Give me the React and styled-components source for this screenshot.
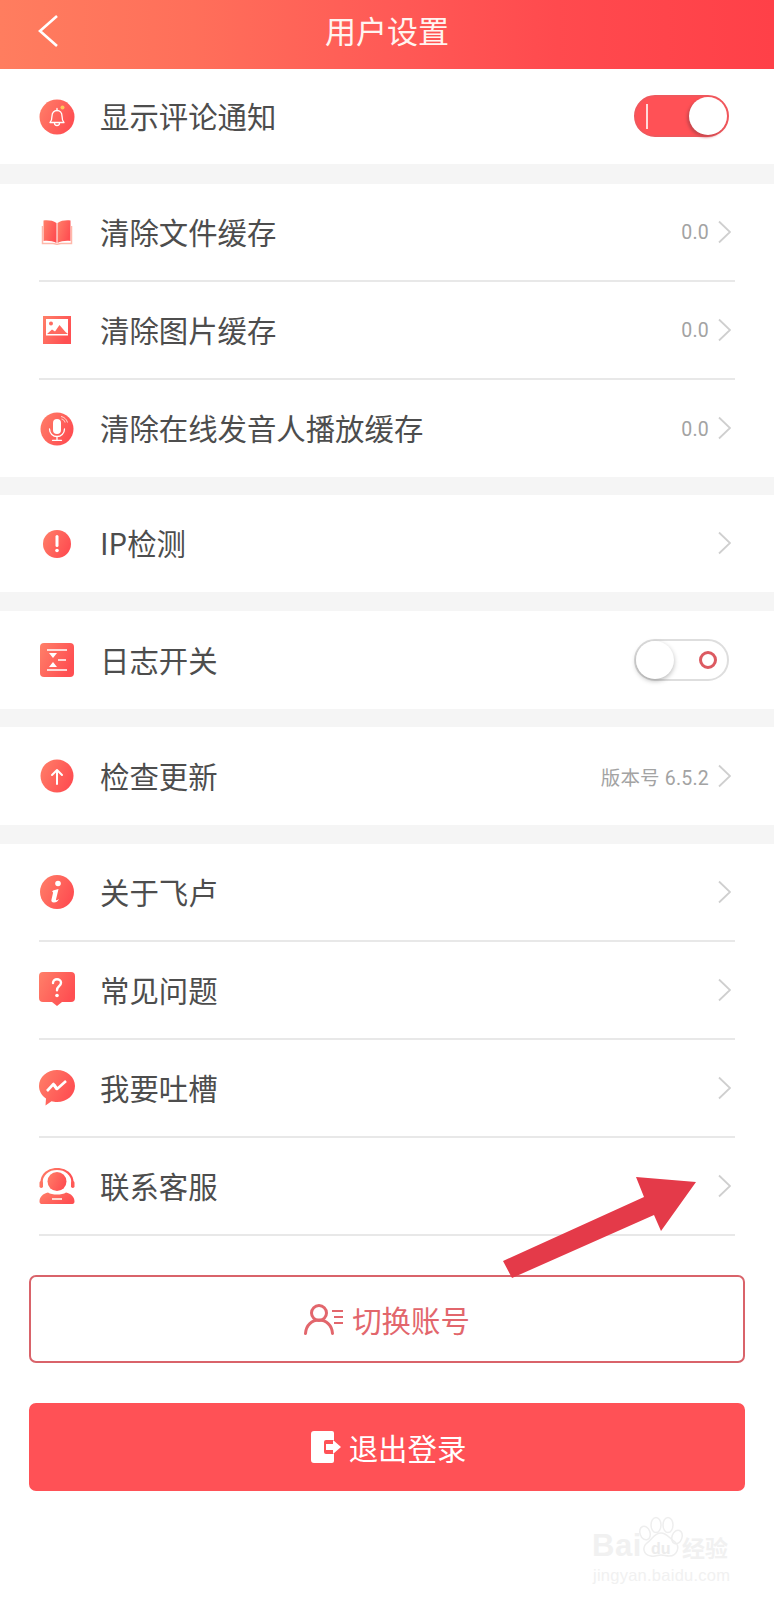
import React from "react";
import styled, { createGlobalStyle } from "styled-components";

const Global = createGlobalStyle`
  html, body { margin: 0; padding: 0; background: #fff; }
  body { font-family: "Noto Sans CJK SC", "Noto Sans", sans-serif; }
`;

const Page = styled.div`
  position: relative;
  width: 774px;
  height: 1600px;
  overflow: hidden;
  background: #fff;
`;

const Header = styled.header`
  height: 69px;
  display: flex;
  align-items: center;
  justify-content: center;
  background: linear-gradient(90deg, #ff7d5f 0%, #ff6f5a 25%, #ff5a56 50%, #ff4a4e 72%, #ff4048 100%);
`;

const BackButton = styled.button`
  position: absolute;
  left: 37px;
  top: 14px;
  width: 24px;
  height: 34px;
  padding: 0;
  border: 0;
  background: none;
  display: block;
`;

const Title = styled.h1`
  margin: -10px 0 0;
  font-size: 31px;
  font-weight: 400;
  line-height: 46px;
  color: #fff4f0;
`;

const Group = styled.section`
  background: #fff;
  margin-bottom: ${(p) => p.$gap || 0}px;
  box-shadow: 0 ${(p) => p.$gap || 0}px 0 #f5f5f5;
`;

const Row = styled.div`
  box-sizing: border-box;
  height: ${(p) => p.$h || 97}px;
  margin: 0 39px;
  padding-right: 5px;
  display: flex;
  align-items: center;
  border-bottom: ${(p) => (p.$line ? "2px solid #e8e8e8" : "0")};
`;

const IconBox = styled.span`
  width: 36px;
  height: 36px;
  margin-right: 25px;
  flex: none;
  display: block;
  svg { display: block; }
`;

const Label = styled.span`
  flex: 1;
  font-size: 29.4px;
  line-height: 40px;
  color: #4d4d4d;
  margin-top: -3px;
`;

const Value = styled.span`
  font-family: Roboto, "Noto Sans CJK SC", sans-serif;
  font-size: 19.5px;
  color: #a3a3a3;
  margin-right: 9px;
  letter-spacing: 0.2px;
  margin-top: 1px;
`;

const Chevron = styled.svg`
  width: 13px;
  height: 24px;
  margin-right: -1px;
  flex: none;
  margin-top: -1px;
`;

const Track = styled.span`
  position: relative;
  box-sizing: border-box;
  width: 95px;
  height: 42px;
  margin: ${(p) => (p.$on ? "-1px" : "0")} 1px 0 0;
  border-radius: 21px;
  flex: none;
  background: ${(p) => (p.$on ? "#ff5156" : "#fff")};
  border: 2px solid ${(p) => (p.$on ? "#f0575c" : "#dedede")};
`;

const Knob = styled.span`
  position: absolute;
  top: 0;
  ${(p) => (p.$on ? "right: 0;" : "left: 0;")}
  width: 38px;
  height: 38px;
  border-radius: 50%;
  background: #fff;
  box-shadow: ${(p) => (p.$on ? "-2px 2px 3px #c8464c" : "0 2px 5px rgba(0,0,0,.28)")};
`;

const OnMark = styled.span`
  position: absolute;
  left: 10px;
  top: 7px;
  width: 2px;
  height: 25px;
  background: #ffd9d9;
`;

const OffMark = styled.span`
  position: absolute;
  right: 10px;
  top: 10px;
  box-sizing: border-box;
  width: 18px;
  height: 18px;
  border-radius: 50%;
  border: 3px solid #dc5a61;
`;

const Actions = styled.div`
  padding: 39px 29px 0;
  display: flex;
  flex-direction: column;
  gap: 40px;
`;

const ActionButton = styled.button`
  box-sizing: border-box;
  height: 88px;
  border-radius: 7px;
  display: flex;
  align-items: center;
  justify-content: center;
  gap: ${(p) => (p.$filled ? 8 : 8)}px;
  padding: ${(p) => (p.$filled ? "0 0 0 3px" : "0")};
  font-family: inherit;
  font-size: 29.4px;
  color: ${(p) => (p.$filled ? "#fff" : "#e2666c")};
  background: ${(p) => (p.$filled ? "#ff5156" : "#fff")};
  border: 2px solid ${(p) => (p.$filled ? "#ff5156" : "#d9636a")};
`;

const ArrowMark = styled.svg`
  position: absolute;
  left: 0;
  top: 0;
  pointer-events: none;
`;

const Watermark = styled.div`
  position: absolute;
  left: 591px;
  top: 1515px;
  width: 145px;
  height: 70px;
  color: #f1f1f1;
`;

const WmBai = styled.span`
  position: absolute;
  left: 1px;
  top: 12px;
  font: 700 31px/38px "Liberation Sans", sans-serif;
  letter-spacing: 0.5px;
`;

const WmDu = styled.span`
  position: absolute;
  left: 60px;
  top: 25px;
  font: 700 16px/18px "Liberation Sans", sans-serif;
  color: #ececec;
`;

const WmCn = styled.span`
  position: absolute;
  left: 91px;
  top: 18px;
  font-size: 23px;
  line-height: 28px;
  font-weight: 700;
`;

const WmUrl = styled.span`
  position: absolute;
  left: 2px;
  top: 50px;
  font: 400 16.5px/20px "Liberation Sans", sans-serif;
  white-space: nowrap;
  letter-spacing: 0.25px;
`;

const Grad = ({ id }) => (
  <defs>
    <linearGradient id={id} x1="0" y1="0" x2="1" y2="0.5">
      <stop offset="0" stopColor="#ff8069" />
      <stop offset="1" stopColor="#ff4f52" />
    </linearGradient>
  </defs>
);

const Svg = ({ id, children }) => (
  <svg width="36" height="36" viewBox="0 0 36 36">
    <Grad id={id} />
    {children}
  </svg>
);

const BellIcon = () => (
  <Svg id="g1">
    <circle cx="18" cy="18" r="17.500" fill="url(#g1)" />
    <path d="M11 23.500c1.500-1.500 2-3 2-6.500 0-3.200 2.200-5.500 5-5.500s5 2.300 5 5.500c0 3.500.5 5 2 6.500z" fill="none" stroke="#fff" strokeWidth="1.300" strokeLinejoin="round" />
    <path d="M15.500 24a2.500 2.500 0 0 0 5 0M18 11.500V9.500" fill="none" stroke="#fff" strokeWidth="1.300" strokeLinecap="round" />
    <circle cx="23.500" cy="8.500" r="2" fill="#ffc65a" />
  </Svg>
);

const BookIcon = () => (
  <Svg id="g2">
    <path d="M17.500 9C14 6.500 9 6 4.500 6.500V27c4.500-.5 9.500 0 13 2z" fill="url(#g2)" />
    <path d="M18.500 9C22 6.500 27 6 31.500 6.500V27c-4.500-.5-9.500 0-13 2z" fill="url(#g2)" />
    <path d="M3.500 12v17.500H14c2 0 3 .8 4 .8s2-.8 4-.8h10.500V12" fill="none" stroke="#ffb8aa" strokeWidth="1.500" />
  </Svg>
);

const ImageIcon = () => (
  <Svg id="g3">
    <rect x="4" y="4" width="28" height="28" fill="url(#g3)" />
    <rect x="7" y="7" width="22" height="16.500" fill="#fff" />
    <circle cx="12" cy="11.500" r="2" fill="#ff6a60" />
    <path d="M8 22l5-4.500 3 2 4.500-6.500 6 7 2.500 2z" fill="#ff6a60" />
  </Svg>
);

const MicIcon = () => (
  <Svg id="g4">
    <circle cx="18" cy="18" r="16.500" fill="url(#g4)" />
    <rect x="14" y="8" width="8" height="15" rx="4" fill="#fff" />
    <path d="M10.500 18c0 4.500 3.500 7.500 7.500 7.500s7.500-3 7.500-7.500M18 25.500v3.500M13.500 29.300h9" fill="none" stroke="#fff" strokeWidth="1.300" strokeLinecap="round" />
    <path d="M22 5.500c3 .5 5.500 2.500 6.500 6M22.500 8c2 .5 3 1.500 3.500 3.500" fill="none" stroke="#ffd9d2" strokeWidth="1" />
  </Svg>
);

const AlertIcon = () => (
  <Svg id="g5">
    <circle cx="18" cy="18" r="14" fill="url(#g5)" />
    <path d="M18 10.500v9" stroke="#fff" strokeWidth="3" strokeLinecap="round" />
    <circle cx="18" cy="24.500" r="1.800" fill="#fff" />
  </Svg>
);

const LogIcon = () => (
  <Svg id="g6">
    <rect x="1" y="1" width="34" height="34" rx="4" fill="url(#g6)" />
    <path d="M8 8h20M8 28h20" stroke="#fff" strokeWidth="1.500" />
    <path d="M10 11h8l-4 5zM10 25l4-5 4 5z" fill="#fff" />
    <path d="M19 18h8" stroke="#fff" strokeWidth="1.500" />
  </Svg>
);

const UpIcon = () => (
  <Svg id="g7">
    <circle cx="18" cy="18" r="16.500" fill="url(#g7)" />
    <path d="M18 26V12M13 17l5-5 5 5" fill="none" stroke="#fff" strokeWidth="2" strokeLinecap="round" strokeLinejoin="round" />
  </Svg>
);

const InfoIcon = () => (
  <Svg id="g8">
    <circle cx="18" cy="18" r="17" fill="url(#g8)" />
    <circle cx="19" cy="9.500" r="2.800" fill="#fff" />
    <path d="M14 16.500l5.500-1.500-2.500 10.500c-.2 1 .5 1.200 3-.5-1 2.500-3 3.500-5 3.500-2.500 0-3-1.500-2.500-3l1.500-6.500c.2-1-.5-1.200-1-1z" fill="#fff" />
  </Svg>
);

const QuestionIcon = () => (
  <Svg id="g9">
    <path d="M4 0h28a4 4 0 0 1 4 4v22a4 4 0 0 1-4 4h-9l-5 4-5-4H4a4 4 0 0 1-4-4V4a4 4 0 0 1 4-4z" fill="url(#g9)" />
    <path d="M14 11c0-2.500 2-3.800 4-3.800s4 1.300 4 3.500c0 3.500-4 3.500-4 7.500" fill="none" stroke="#fff" strokeWidth="2.400" strokeLinecap="round" />
    <circle cx="18" cy="23.500" r="1.800" fill="#fff" />
  </Svg>
);

const ChatIcon = () => (
  <Svg id="g10">
    <path d="M18 0c10 0 18 7 18 16s-8 16-18 16c-2 0-4-.3-5.500-.8L6.500 35.500l.5-7C2.500 25.500 0 21 0 16 0 7 8 0 18 0z" fill="url(#g10)" />
    <path d="M8 21l6.500-7 3.500 5 9-8" fill="none" stroke="#fff" strokeWidth="2.600" strokeLinejoin="round" />
    <path d="M18 19l-3-4" stroke="#fff" strokeWidth="3" />
  </Svg>
);

const AgentIcon = () => (
  <Svg id="g11">
    <circle cx="18" cy="13.500" r="9.500" fill="url(#g11)" />
    <path d="M2.500 15C2.500 6 9.500 1 18 1s15.500 5 15.500 14" fill="none" stroke="url(#g11)" strokeWidth="2.200" />
    <rect x="0.500" y="13" width="3.500" height="7" rx="1.700" fill="#ff7563" />
    <rect x="32" y="13" width="3.500" height="7" rx="1.700" fill="#ff5a56" />
    <path d="M9 24.500c2 1.500 5.500 2 9 2s7-.5 9-2c5 1 8.500 4.500 8.500 9 0 1.500-.8 2.500-2 2.500H2.500c-1.200 0-2-1-2-2.500 0-4.500 3.500-8 8.500-9z" fill="url(#g11)" />
    <rect x="13" y="30" width="10" height="2" fill="#ffd9d2" />
  </Svg>
);

const ChevronRight = () => (
  <Chevron viewBox="0 0 13 24">
    <path d="M1 1.500L12 12 1 22.500" fill="none" stroke="#cfcfcf" strokeWidth="1.800" />
  </Chevron>
);

const Toggle = ({ on }) => (
  <Track $on={on}>
    {on ? <OnMark /> : <OffMark />}
    <Knob $on={on} />
  </Track>
);

const SettingRow = ({ icon, label, value, toggle, line, h }) => (
  <Row $line={line} $h={h}>
    <IconBox>{icon}</IconBox>
    <Label>{label}</Label>
    {toggle !== undefined ? (
      <Toggle on={toggle} />
    ) : (
      <>
        {value && <Value>{value}</Value>}
        <ChevronRight />
      </>
    )}
  </Row>
);

export default function App() {
  return (
    <Page>
      <Global />
      <Header>
        <BackButton aria-label="返回">
          <svg width="24" height="34" viewBox="0 0 24 34">
            <path d="M20 2L3 17l17 15" fill="none" stroke="#fff" strokeWidth="2.600" />
          </svg>
        </BackButton>
        <Title>用户设置</Title>
      </Header>

      <Group $gap={20}>
        <SettingRow h={95} icon={<BellIcon />} label="显示评论通知" toggle={true} />
      </Group>
      <Group $gap={18}>
        <SettingRow h={98} line icon={<BookIcon />} label="清除文件缓存" value="0.0" />
        <SettingRow h={98} line icon={<ImageIcon />} label="清除图片缓存" value="0.0" />
        <SettingRow h={97} icon={<MicIcon />} label="清除在线发音人播放缓存" value="0.0" />
      </Group>
      <Group $gap={19}>
        <SettingRow h={97} icon={<AlertIcon />} label="IP检测" />
      </Group>
      <Group $gap={18}>
        <SettingRow h={98} icon={<LogIcon />} label="日志开关" toggle={false} />
      </Group>
      <Group $gap={19}>
        <SettingRow h={98} icon={<UpIcon />} label="检查更新" value="版本号 6.5.2" />
      </Group>
      <Group>
        <SettingRow h={98} line icon={<InfoIcon />} label="关于飞卢" />
        <SettingRow h={98} line icon={<QuestionIcon />} label="常见问题" />
        <SettingRow h={98} line icon={<ChatIcon />} label="我要吐槽" />
        <SettingRow h={98} line icon={<AgentIcon />} label="联系客服" />
      </Group>

      <Actions>
        <ActionButton>
          <svg width="40" height="32" viewBox="0 0 40 32">
            <circle cx="15" cy="10" r="7.500" fill="none" stroke="#e2666c" strokeWidth="3" />
            <path d="M1.500 30.500C2 22 8 17 15 17s13 5 13.500 13.500" fill="none" stroke="#e2666c" strokeWidth="3" strokeLinecap="round" />
            <path d="M28 8h11M30 14h9M30 20h9" stroke="#e2666c" strokeWidth="2" />
          </svg>
          切换账号
        </ActionButton>
        <ActionButton $filled>
          <svg width="30" height="32" viewBox="0 0 30 32">
            <path d="M3 0h18a2 2 0 0 1 2 2v7h-8a2 2 0 0 0-2 2v10a2 2 0 0 0 2 2h8v7a2 2 0 0 1-2 2H3a3 3 0 0 1-3-3V3a3 3 0 0 1 3-3z" fill="#fff" />
            <path d="M15 13h7V9l8 7-8 7v-4h-7z" fill="#fff" />
          </svg>
          退出登录
        </ActionButton>
      </Actions>

      <ArrowMark width="774" height="1600" viewBox="0 0 774 1600">
        <polygon points="503,1261 512,1278 654,1215 661,1231 696,1182 636,1177 644,1197" fill="#e43a49" />
      </ArrowMark>

      <Watermark>
        <WmBai>Bai</WmBai>
        <svg width="145" height="70" viewBox="0 0 145 70">
          <g fill="none" stroke="#eeeeee" strokeWidth="1.500">
            <ellipse cx="54" cy="18" rx="5" ry="7" transform="rotate(-20 54 18)" />
            <ellipse cx="65" cy="10" rx="5" ry="7.500" />
            <ellipse cx="77" cy="10" rx="5" ry="7.500" />
            <ellipse cx="86" cy="22" rx="5" ry="7" transform="rotate(20 86 22)" />
            <path d="M70 18c6 0 9 6 14 9 5 4 3 14-6 14-3 0-5-1-8-1s-6 2-10 1c-8-1-9-9-4-13 5-3 7-10 14-10z" />
          </g>
        </svg>
        <WmDu>du</WmDu>
        <WmCn>经验</WmCn>
        <WmUrl>jingyan.baidu.com</WmUrl>
      </Watermark>
    </Page>
  );
}
